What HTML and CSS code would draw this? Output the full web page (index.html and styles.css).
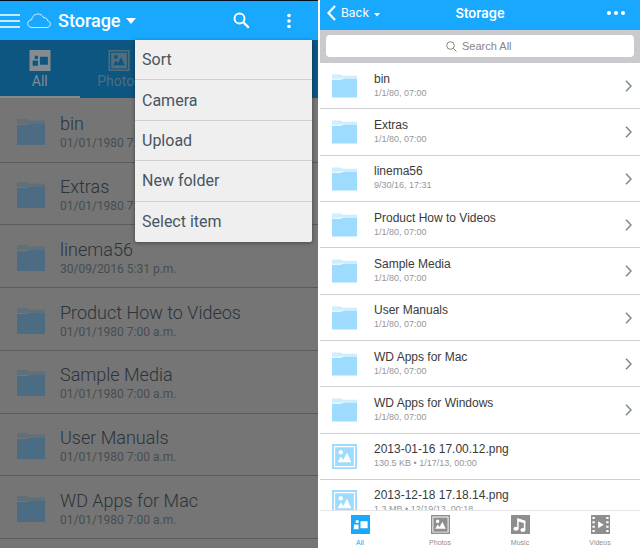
FILE: index.html
```html
<!DOCTYPE html>
<html lang="en">
<head>
<meta charset="utf-8">
<title>Storage</title>
<link rel="stylesheet" href="styles.css">
</head>
<body>
<svg class="defs" aria-hidden="true">
  <symbol id="folder" viewBox="0 0 28 26">
    <path class="tab" d="M0 0h10l2 1.500h16V4H12l-2 1H0z"/>
    <path class="front" d="M0 6h10l3-1.500h15V26H0z"/>
  </symbol>
  <symbol id="all" viewBox="0 0 20 20">
    <path fill="currentColor" fill-rule="evenodd" d="M0 0h20v20H0zM5 5.500v3h3v-3zM3 10v5h5v-5zM10 6.500V14h7.500V6.500z"/>
  </symbol>
  <symbol id="photo" viewBox="0 0 20 20">
    <path fill="currentColor" fill-rule="evenodd" d="M0 0h20v20H0zM1.500 1.500v17h17v-17z"/>
    <path fill="currentColor" fill-rule="evenodd" d="M2.500 2.500h15v15h-15zM4.500 14.500h11L12 7l-3 5.500-2-2.500zM7 4.800a1.800 1.800 0 1 0 .01 0z"/>
  </symbol>
  <symbol id="music" viewBox="0 0 20 20">
    <path fill="currentColor" d="M0 0h20v20H0z"/>
    <path fill="none" stroke="#fff" stroke-width="1.600" d="M7.300 14.500V4.500l7 2.500v9"/>
    <path fill="#fff" d="M7 3.500l8 2.500v3L7 6.500z"/>
    <ellipse cx="5.300" cy="14.500" rx="2.700" ry="2.200" fill="#fff"/>
    <ellipse cx="12.500" cy="15.800" rx="2.600" ry="2.200" fill="#fff"/>
  </symbol>
  <symbol id="video" viewBox="0 0 20 20">
    <path fill="currentColor" fill-rule="evenodd" d="M0 0h20v20H0zM1.500 2v2.200h2.500V2zM1.500 6.500v2.200h2.500V6.500zM1.500 11.200v2.200h2.500v-2.200zM1.500 15.800V18h2.500v-2.200zM16 2v2.200h2.500V2zM16 6.500v2.200h2.500V6.500zM16 11.200v2.200h2.500v-2.200zM16 15.800V18h2.500v-2.200zM7.500 6.500v7.500l6-3.700z"/>
  </symbol>
  <symbol id="chevron" viewBox="0 0 7 12">
    <path fill="none" stroke="#7d8b95" stroke-width="1.600" d="M1 .7L6 6l-5 5.300"/>
  </symbol>
</svg>
<main class="screens">
  <section class="droid">
    <header class="droid-bar">
      <button class="icon-btn" aria-label="Navigation"><svg width="20" height="14" viewBox="0 0 20 14"><path d="M0 1h20M0 7h20M0 13h20" stroke="#fff" stroke-width="1.500"/></svg></button>
      <svg class="cloud" width="24" height="16" viewBox="0 0 24 16"><path fill="none" stroke="#fff" stroke-width=".8" d="M5 14.500C2.500 14.500.7 12.800.7 10.600.7 8.300 2.500 6.800 4.600 6.800 5 3.300 7.700 1 10.800 1c2.600 0 4.700 1.300 5.700 3.700 2.200-.4 4 1 4.100 3.100 1.600.3 2.700 1.500 2.700 3.200 0 2-1.500 3.500-3.500 3.500z"/></svg>
      <button class="droid-title">Storage <svg width="10" height="6" viewBox="0 0 10 6"><path fill="#fff" d="M0 0h10L5 6z"/></svg></button>
      <button class="icon-btn find" aria-label="Search"><svg width="17" height="17" viewBox="0 0 17 17"><circle cx="6.500" cy="6.500" r="5" fill="none" stroke="#fff" stroke-width="1.900"/><path d="M10.300 10.300l5.500 5.500" stroke="#fff" stroke-width="2.300"/></svg></button>
      <button class="icon-btn" aria-label="More"><svg width="4" height="16" viewBox="0 0 4 16"><g fill="#fff"><circle cx="2" cy="2.500" r="1.800"/><circle cx="2" cy="8" r="1.800"/><circle cx="2" cy="13.500" r="1.800"/></g></svg></button>
    </header>
    <nav class="droid-tabs">
      <a class="on" href="#all"><svg><use href="#all"/></svg>All</a>
      <a href="#photos"><svg><use href="#photo"/></svg>Photos</a>
    </nav>
    <ul class="droid-list">
      <li><svg><use href="#folder"/></svg><div><b>bin</b><small>01/01/1980 7:00 a.m.</small></div></li>
      <li><svg><use href="#folder"/></svg><div><b>Extras</b><small>01/01/1980 7:00 a.m.</small></div></li>
      <li><svg><use href="#folder"/></svg><div><b>linema56</b><small>30/09/2016 5:31 p.m.</small></div></li>
      <li><svg><use href="#folder"/></svg><div><b>Product How to Videos</b><small>01/01/1980 7:00 a.m.</small></div></li>
      <li><svg><use href="#folder"/></svg><div><b>Sample Media</b><small>01/01/1980 7:00 a.m.</small></div></li>
      <li><svg><use href="#folder"/></svg><div><b>User Manuals</b><small>01/01/1980 7:00 a.m.</small></div></li>
      <li><svg><use href="#folder"/></svg><div><b>WD Apps for Mac</b><small>01/01/1980 7:00 a.m.</small></div></li>
    </ul>
    <div class="menu">
      <button>Sort</button>
      <button>Camera</button>
      <button>Upload</button>
      <button>New folder</button>
      <button>Select item</button>
    </div>
  </section>
  <section class="ios">
    <header class="ios-bar">
      <button class="back"><svg width="9" height="16" viewBox="0 0 9 16"><path d="M8 1L1.500 8 8 15" fill="none" stroke="#fff" stroke-width="2.200"/></svg>Back<svg class="caret" width="6" height="4" viewBox="0 0 6 4"><path fill="#fff" d="M0 0h6L3 3.500z"/></svg></button>
      <h1>Storage</h1>
      <button class="more" aria-label="More"><svg width="18" height="4" viewBox="0 0 18 4"><g fill="#fff"><circle cx="2" cy="2" r="2"/><circle cx="9" cy="2" r="2"/><circle cx="16" cy="2" r="2"/></g></svg></button>
    </header>
    <div class="search-band">
      <label class="search"><svg width="11" height="11" viewBox="0 0 11 11"><circle cx="4.500" cy="4.500" r="3.800" fill="none" stroke="#858585"/><path d="M7.300 7.300l3.200 3.200" stroke="#858585"/></svg><input type="text" placeholder="Search All" aria-label="Search All"></label>
    </div>
    <ul class="ios-list">
      <li><svg><use href="#folder"/></svg><div><b>bin</b><small>1/1/80, 07:00</small></div><svg class="go"><use href="#chevron"/></svg></li>
      <li><svg><use href="#folder"/></svg><div><b>Extras</b><small>1/1/80, 07:00</small></div><svg class="go"><use href="#chevron"/></svg></li>
      <li><svg><use href="#folder"/></svg><div><b>linema56</b><small>9/30/16, 17:31</small></div><svg class="go"><use href="#chevron"/></svg></li>
      <li><svg><use href="#folder"/></svg><div><b>Product How to Videos</b><small>1/1/80, 07:00</small></div><svg class="go"><use href="#chevron"/></svg></li>
      <li><svg><use href="#folder"/></svg><div><b>Sample Media</b><small>1/1/80, 07:00</small></div><svg class="go"><use href="#chevron"/></svg></li>
      <li><svg><use href="#folder"/></svg><div><b>User Manuals</b><small>1/1/80, 07:00</small></div><svg class="go"><use href="#chevron"/></svg></li>
      <li><svg><use href="#folder"/></svg><div><b>WD Apps for Mac</b><small>1/1/80, 07:00</small></div><svg class="go"><use href="#chevron"/></svg></li>
      <li><svg><use href="#folder"/></svg><div><b>WD Apps for Windows</b><small>1/1/80, 07:00</small></div><svg class="go"><use href="#chevron"/></svg></li>
      <li><svg class="pic"><use href="#photo"/></svg><div><b>2013-01-16 17.00.12.png</b><small>130.5 KB • 1/17/13, 00:00</small></div></li>
      <li><svg class="pic"><use href="#photo"/></svg><div><b>2013-12-18 17.18.14.png</b><small>1.3 MB • 12/19/13, 00:18</small></div></li>
    </ul>
    <nav class="ios-tabs">
      <a class="on" href="#all"><svg><use href="#all"/></svg>All</a>
      <a href="#photos"><svg><use href="#photo"/></svg>Photos</a>
      <a href="#music"><svg><use href="#music"/></svg>Music</a>
      <a href="#videos"><svg><use href="#video"/></svg>Videos</a>
    </nav>
  </section>
</main>
</body>
</html>
```
FILE: styles.css
```css
* { box-sizing: border-box; }
body { margin: 0; background: #fff; }
button { border: 0; padding: 0; background: none; color: inherit; font: inherit; }
ul { list-style: none; margin: 0; padding: 0; }
a { text-decoration: none; color: inherit; }
svg { display: block; flex: none; }
b, small { display: block; font-weight: 400; white-space: nowrap; }
.defs { position: absolute; width: 0; height: 0; }

.screens { display: grid; grid-template-columns: 318fr 322fr; height: 100vh; }

.droid {
  position: relative;
  display: flex;
  flex-direction: column;
  min-width: 0;
  overflow: hidden;
  background: #757575;
  font-family: Roboto, sans-serif;
}
.droid-bar {
  display: flex;
  align-items: center;
  height: 40px;
  padding-right: 27px;
  border-top: 1px solid #04111c;
  background: #18a9ff;
  color: #fff;
}
.cloud { margin: 0 7px; }
.droid-title { display: flex; align-items: center; gap: 5px; font-size: 18px; font-weight: 500; }
.find { margin: 0 37px 0 auto; }
.droid-tabs {
  display: flex;
  height: 58px;
  background: #0c5681;
  color: #506d7d;
  font-size: 14px;
  line-height: 16px;
}
.droid-tabs a {
  display: flex;
  flex-direction: column;
  align-items: center;
  gap: 2px;
  width: 25%;
  padding-top: 10px;
  border-bottom: 2px solid transparent;
}
.droid-tabs .on { color: #858c90; border-color: #858c90; }
.droid-tabs svg { width: 22px; height: 21px; }

.droid-list { flex: 1; display: flex; flex-direction: column; padding: 2px 0 9px; }
.droid-list li {
  flex: 1;
  display: flex;
  align-items: center;
  gap: 15px;
  padding: 3px 17px 0;
  border-bottom: 1px solid #5b5b5b;
}
.droid-list svg { width: 28px; height: 26px; fill: #4b6c82; }
.droid-list b { color: #2b333b; font-size: 18px; font-weight: 300; line-height: 22px; }
.droid-list small { color: #454d52; font-size: 12px; line-height: 16px; }
#folder .tab { opacity: .5; }

.menu {
  position: absolute;
  top: 40px;
  right: 6px;
  display: grid;
  grid-auto-rows: 1fr;
  width: 177px;
  height: 202px;
  border-radius: 0 0 2px 2px;
  background: #efefef;
  box-shadow: 0 1px 4px rgba(0, 0, 0, .4);
  color: #485563;
  font-size: 16px;
}
.menu button { padding: 0 7px; text-align: left; border-bottom: 1px solid #cfcfcf; }
.menu button:last-child { border-bottom: 0; }

.ios {
  display: flex;
  flex-direction: column;
  min-width: 0;
  margin-left: 2px;
  font-family: "Liberation Sans", sans-serif;
}
.ios-bar {
  display: grid;
  grid-template-columns: 1fr auto 1fr;
  align-items: center;
  height: 30px;
  padding: 0 15px 5px 7px;
  background: #18a9ff;
  color: #fff;
  font: 12px/16px Inter, sans-serif;
}
.ios-bar h1 { margin: 0; padding-left: 8px; font-size: 13px; font-weight: 600; }
.back { display: flex; align-items: center; gap: 5px; }
.caret { margin-top: 5px; }
.more { justify-self: end; }
.search-band { height: 33px; padding: 5px 6px 6px; background: #c9c9ce; }
.search {
  display: flex;
  align-items: center;
  justify-content: center;
  gap: 5px;
  height: 22px;
  border-radius: 4px;
  background: #fff;
}
.search input {
  width: 52px;
  padding: 0;
  border: 0;
  outline: 0;
  background: none;
  font: 11px/16px "Liberation Sans", sans-serif;
}
.search input::placeholder { color: #858585; opacity: 1; }

.ios-list { flex: 1; min-height: 0; display: grid; grid-template-rows: repeat(9, 1fr) 30px; overflow: hidden; }
.ios-list li {
  display: flex;
  align-items: center;
  gap: 17px;
  min-height: 46px;
  padding: 1px 8px 0 12px;
  border-bottom: 1px solid #cfcfcf;
}
.ios-list svg { width: 25px; height: 24px; fill: #9edcff; }
.ios-list .pic { height: 25px; color: #9edcff; }
.ios-list div { padding-bottom: 2px; }
.ios-list b { color: #3a3a3a; font-size: 12px; line-height: 16px; }
.ios-list small { color: #969696; font-size: 9px; line-height: 13px; }
.ios-list .go { width: 7px; height: 12px; margin-left: auto; }

.ios-tabs {
  display: grid;
  grid-template-columns: repeat(4, 1fr);
  height: 38px;
  border-top: 1px solid #e6e6e6;
  background: #fff;
  color: #8e8e8e;
  font-size: 7px;
  line-height: 9px;
}
.ios-tabs a { display: flex; flex-direction: column; align-items: center; gap: 4px; padding-top: 4px; }
.ios-tabs .on { color: #18a9ff; }
.ios-tabs svg { width: 19px; height: 19px; }
```
